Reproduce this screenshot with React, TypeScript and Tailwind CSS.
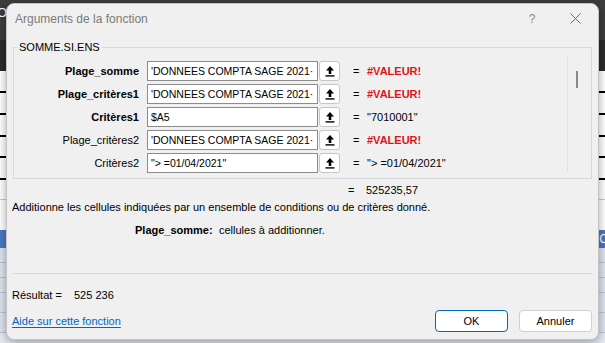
import React from "react";

/* ── Petite icône "réduire" du bouton de plage ─────────────── */
function CollapseIcon() {
  return (
    <svg width="10" height="12" viewBox="0 0 10 12" className="block">
      <path d="M5 1 L9 5.5 L6.3 5.5 L6.3 9 L3.7 9 L3.7 5.5 L1 5.5 Z" fill="#000" />
      <rect x="0.5" y="10.2" width="9" height="1.4" fill="#000" />
    </svg>
  );
}

interface ArgRow {
  label: string;
  bold: boolean;
  input: string;
  value: string;
  error?: boolean;
}

const rows: ArgRow[] = [
  { label: "Plage_somme", bold: true, input: "'DONNEES COMPTA SAGE 2021·", value: "#VALEUR!", error: true },
  { label: "Plage_critères1", bold: true, input: "'DONNEES COMPTA SAGE 2021·", value: "#VALEUR!", error: true },
  { label: "Critères1", bold: true, input: "$A5", value: "\"7010001\"" },
  { label: "Plage_critères2", bold: false, input: "'DONNEES COMPTA SAGE 2021·", value: "#VALEUR!", error: true },
  { label: "Critères2", bold: false, input: "\"> =01/04/2021\"", value: "\"> =01/04/2021\"" },
];

function Backdrop() {
  // la feuille Excel visible autour de la boîte de dialogue
  return (
    <div className="flex flex-col h-full">
      <div className="h-[40px] bg-[#3d3d3d] pl-0 pt-[6px] text-white text-[13px] leading-[14px]">
        <span className="-ml-[3px]">O</span>
      </div>
      <div className="h-[31px] bg-[#2b2b2b]" />
      <div className="h-[22px] bg-white border-b-2 border-black" />
      <div className="h-[22px] bg-white border-b-2 border-black" />
      <div className="h-[22px] bg-white border-b-2 border-black" />
      <div className="h-[21px] bg-white border-b-2 border-black" />
      <div className="h-[22px] bg-white border-b-2 border-black" />
      <div className="h-[20px] bg-white border-b border-[#c8c8c8]" />
      <div className="h-[30px] bg-white" />
      <div className="h-[18px] bg-[#4b78c2] flex justify-end pr-0 text-white text-[12px] leading-[18px]">
        <span className="-mr-[3px]">C</span>
      </div>
      <div className="h-[15px] bg-[#dde4ef] border-b border-[#b9c3d3]" />
      <div className="h-[15px] bg-[#dde4ef] border-b border-[#b9c3d3]" />
      <div className="h-[15px] bg-[#dde4ef] border-b border-[#b9c3d3]" />
      <div className="h-[20px] bg-[#dde4ef] border-b border-[#b9c3d3]" />
      <div className="h-[20px] bg-[#dde4ef] border-b border-[#b9c3d3]" />
      <div className="flex-1 bg-[#e4e9f1]" />
    </div>
  );
}

export default function App() {
  return (
    <div
      className="relative w-[605px] h-[343px] overflow-hidden text-black"
      style={{ fontFamily: '"Liberation Sans", Arial, sans-serif' }}
    >
      <Backdrop />

      {/* ── Boîte de dialogue ── */}
      <div className="absolute left-[6px] top-[3px] w-[593px] h-[337px] bg-[#f0f0f0] rounded-[8px] border border-[#c4c4c4] shadow-[0_2px_10px_rgba(0,0,0,0.35)] flex flex-col px-[6px]">
        {/* title bar */}
        <div className="h-[36px] flex items-start pt-[8px] text-[12px] leading-[14px] text-[#7a7a7a]">
          <span className="pl-[2px]">Arguments de la fonction</span>
          <span className="ml-auto w-[12px] text-center text-[#8a8a8a]">?</span>
          <span className="ml-[32px] mr-[10px] mt-[1px] w-[12px]">
            <svg width="11" height="11" viewBox="0 0 11 11">
              <path d="M0.5 0.5 L10.5 10.5 M10.5 0.5 L0.5 10.5" stroke="#6a6a6a" strokeWidth="1" />
            </svg>
          </span>
        </div>

        {/* group box */}
        <fieldset className="border border-[#d9d9d9] h-[139px] px-0 pb-[4px]">
          <legend className="ml-[3px] px-[2px] text-[11px] leading-[14px]">SOMME.SI.ENS</legend>
          <div className="flex h-full">
            <div className="flex flex-col gap-[3px] pt-[7px]">
              {rows.map((r) => (
                <div key={r.label} className="flex items-center h-[20px] text-[11px] leading-[14px]">
                  <div className={`w-[125px] text-right ${r.bold ? "font-bold" : ""}`}>{r.label}</div>
                  <div className="ml-[8px] w-[171px] h-[20px] bg-white border border-[#8c8c8c] px-[3px] overflow-hidden whitespace-nowrap text-[10.5px] leading-[18px]">
                    {r.input}
                  </div>
                  <div className="ml-[1px] w-[21px] h-[20px] bg-white border border-[#c6c6c6] rounded-[3px] flex items-center justify-center">
                    <CollapseIcon />
                  </div>
                  <div className="ml-[13px] w-[14px]">=</div>
                  <div className={r.error ? "text-[#e0131a] font-bold" : ""}>{r.value}</div>
                </div>
              ))}
            </div>
            {/* scrollbar */}
            <div className="ml-auto mr-[12px] mt-[1px] mb-[1px] w-[12px] border-l border-[#e2e2e2] pl-[8px] pt-[16px]">
              <div className="w-[2px] h-[17px] bg-[#8a8a8a]" />
            </div>
          </div>
        </fieldset>

        <div className="mt-[4px] pl-[335px] flex text-[11px] leading-[14px]">
          <span className="w-[18px]">=</span>
          <span>525235,57</span>
        </div>
        <div className="mt-[3px] -ml-[1px] text-[11px] leading-[14px]">
          Additionne les cellules indiquées par un ensemble de conditions ou de critères donné.
        </div>
        <div className="mt-[9px] pl-[122px] flex text-[11px] leading-[14px]">
          <span className="w-[84px] font-bold">Plage_somme:</span>
          <span>cellules à additionner.</span>
        </div>

        <div className="mt-[36px] h-px bg-[#d9d9d9]" />

        <div className="mt-[14px] flex text-[11px] leading-[14px] -ml-[1px]">
          <span className="w-[62px]">Résultat =</span>
          <span>525 236</span>
        </div>

        <div className="mt-[8px] flex items-center -ml-[1px]">
          <a className="text-[11px] leading-[14px] text-[#0067c0] underline underline-offset-2">
            Aide sur cette fonction
          </a>
          <button className="ml-auto w-[73px] h-[22px] bg-white border border-[#0067c0] rounded-[4px] text-[11px]">
            OK
          </button>
          <button className="ml-[11px] w-[73px] h-[22px] bg-white border border-[#d0d0d0] rounded-[4px] text-[11px]">
            Annuler
          </button>
        </div>
      </div>
    </div>
  );
}
